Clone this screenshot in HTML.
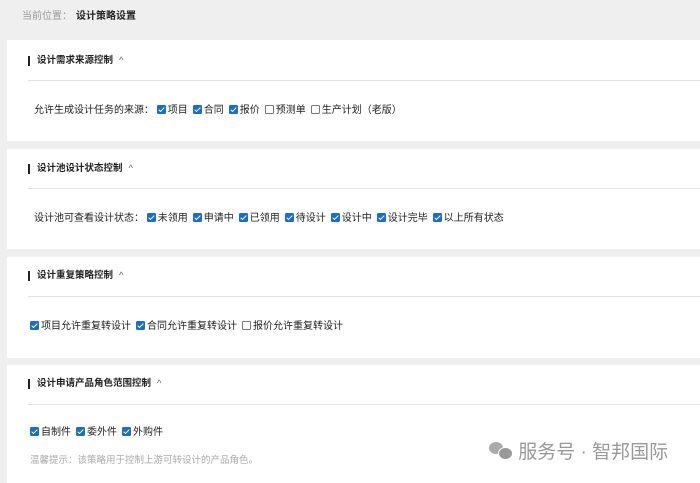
<!DOCTYPE html><html><head><meta charset="utf-8"><style>
body{margin:0;width:700px;height:483px;background:#efefef;font-family:"Liberation Sans","Noto Sans CJK SC",sans-serif;font-size:10px;color:#222;position:relative;overflow:hidden}
.crumb{position:absolute;left:22px;top:7px;font-size:10px;color:#999}
.crumb b{color:#222;margin-left:4px}
.card{position:absolute;left:7px;right:0;background:#fff}
.t{position:absolute;left:21px;font-weight:bold;font-size:9.5px;padding-left:9px;line-height:11px}
.t:before{content:"";position:absolute;left:0;top:1px;width:1.5px;height:10px;background:#222}
.t span{font-weight:normal;color:#666;margin-left:6px}
.hr{position:absolute;left:21px;right:0;height:1px;background:#e2e2e2}
.row{position:absolute;white-space:nowrap;line-height:12px}
.cb{display:inline-block;width:9px;height:9px;border-radius:1.5px;background:#1b6ec2;vertical-align:-1px;margin-right:2px;position:relative}
.cb:after{content:"";position:absolute;left:3px;top:0.5px;width:2px;height:5px;border:solid #fff;border-width:0 1.3px 1.3px 0;transform:rotate(45deg)}
.cb.u{background:#fff;border:1px solid #777;width:7px;height:7px}
.cb.u:after{display:none}
.i{margin-right:5px}
</style></head><body>
<div class="crumb">当前位置：<b>设计策略设置</b></div>
<div class="card" style="top:40px;height:101px">
<div class="t" style="top:15px">设计需求来源控制<span>^</span></div>
<div class="hr" style="top:40px"></div>
<div class="row" style="left:27px;top:65px">允许生成设计任务的来源： <span class="i"><i class="cb"></i>项目</span><span class="i"><i class="cb"></i>合同</span><span class="i"><i class="cb"></i>报价</span><span class="i"><i class="cb u"></i>预测单</span><span class="i"><i class="cb u"></i>生产计划（老版）</span></div>
</div>
<div class="card" style="top:149px;height:100px">
<div class="t" style="top:14px">设计池设计状态控制<span>^</span></div>
<div class="hr" style="top:39px"></div>
<div class="row" style="left:27px;top:64px">设计池可查看设计状态： <span class="i"><i class="cb"></i>未领用</span><span class="i"><i class="cb"></i>申请中</span><span class="i"><i class="cb"></i>已领用</span><span class="i"><i class="cb"></i>待设计</span><span class="i"><i class="cb"></i>设计中</span><span class="i"><i class="cb"></i>设计完毕</span><span class="i"><i class="cb"></i>以上所有状态</span></div>
</div>
<div class="card" style="top:257px;height:101px">
<div class="t" style="top:13px">设计重复策略控制<span>^</span></div>
<div class="hr" style="top:39px"></div>
<div class="row" style="left:23px;top:64px"><span class="i"><i class="cb"></i>项目允许重复转设计</span><span class="i"><i class="cb"></i>合同允许重复转设计</span><span class="i"><i class="cb u"></i>报价允许重复转设计</span></div>
</div>
<div class="card" style="top:365px;height:118px">
<div class="t" style="top:13px">设计申请产品角色范围控制<span>^</span></div>
<div class="hr" style="top:39px"></div>
<div class="row" style="left:23px;top:62px"><span class="i"><i class="cb"></i>自制件</span><span class="i"><i class="cb"></i>委外件</span><span class="i"><i class="cb"></i>外购件</span></div>
<div class="row" style="left:23px;top:90px;color:#aaa;font-size:9.5px">温馨提示：该策略用于控制上游可转设计的产品角色。</div>
<div class="row" style="left:482px;top:76px;font-size:19px;line-height:24px;color:#999"><span style="display:inline-block;width:24px;height:20px;vertical-align:-3px;position:relative"><i style="position:absolute;left:0;top:1px;width:14px;height:12px;border-radius:50%;background:#aaa"></i><i style="position:absolute;left:9px;top:6px;width:13px;height:11px;border-radius:50%;background:#999;border:1px solid #fff"></i></span> 服务号 · 智邦国际</div>
</div>
</body></html>
